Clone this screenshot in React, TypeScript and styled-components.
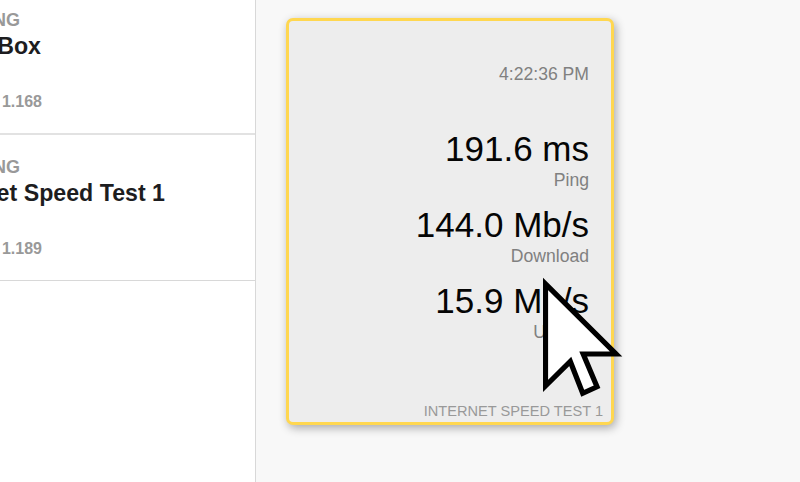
import React from "react";
import styled, { createGlobalStyle } from "styled-components";

const GlobalStyle = createGlobalStyle`
  body { margin: 0; overflow: hidden; background: #f8f8f8; }
  * { box-sizing: border-box; }
`;

const Page = styled.div`
  display: flex;
  width: 800px;
  height: 482px;
  overflow: hidden;
  background: #f8f8f8;
  font-family: "Liberation Sans", Arial, sans-serif;
`;

const Sidebar = styled.aside`
  width: 256px;
  flex: none;
  overflow: hidden;
  background: #fff;
  border-right: 1px solid #d8d8d8;
`;

const Device = styled.section<{ $first?: boolean }>`
  height: ${(p) => (p.$first ? 135 : 146)}px;
  padding-top: ${(p) => (p.$first ? 9 : 21)}px;
  border-bottom: ${(p) => (p.$first ? "2px solid #e2e2e2" : "1px solid #d8d8d8")};
  font-weight: 700;
  white-space: nowrap;
`;

/* Rows end at a fixed edge so that long text runs off the left side. */
const Row = styled.div<{ $end: number }>`
  display: flex;
  justify-content: flex-end;
  width: ${(p) => p.$end}px;
`;

const Kind = styled(Row)`
  font-size: 18px;
  line-height: 22px;
  color: #999;
`;

const Name = styled(Row)`
  font-size: 23.2px;
  line-height: 30px;
  color: #1d1d1f;
`;

const Address = styled(Row)`
  margin-top: 31px;
  font-size: 16px;
  line-height: 20px;
  color: #999;
`;

const Main = styled.main`
  flex: 1;
  padding: 18px 0 0 30px;
`;

const Card = styled.article`
  position: relative;
  display: flex;
  flex-direction: column;
  width: 328px;
  height: 407px;
  padding: 43px 22px 0 0;
  text-align: right;
  white-space: nowrap;
  background: #ededed;
  border: 3px solid #ffd750;
  border-radius: 7px;
  box-shadow: 2px 3px 10px rgba(0, 0, 0, 0.32);
`;

const Time = styled.time`
  font-size: 17.6px;
  line-height: 20px;
  color: #808080;
`;

const Metrics = styled.div`
  display: flex;
  flex-direction: column;
  margin-top: 45px;
`;

const Metric = styled.div`
  height: 76px;
`;

const Value = styled.div`
  font-size: 35px;
  line-height: 40px;
  color: #050505;
`;

const Label = styled.div`
  font-size: 17.6px;
  line-height: 22px;
  color: #808080;
`;

const Footer = styled.footer`
  margin: auto -14px 2px 0;
  font-size: 14.6px;
  line-height: 18px;
  color: #999;
`;

const Pointer = styled.svg`
  position: absolute;
  left: 254px;
  top: 254px;
  width: 84px;
  height: 126px;
`;

const metrics = [
  ["191.6 ms", "Ping"],
  ["144.0 Mb/s", "Download"],
  ["15.9 Mb/s", "Upload"],
];

export default function App() {
  return (
    <Page>
      <GlobalStyle />
      <Sidebar>
        <Device $first>
          <Kind $end={20}>NG</Kind>
          <Name $end={41}>Box</Name>
          <Address $end={42}>1.168</Address>
        </Device>
        <Device>
          <Kind $end={20}>NG</Kind>
          <Name $end={165}>et Speed Test 1</Name>
          <Address $end={42}>1.189</Address>
        </Device>
      </Sidebar>
      <Main>
        <Card>
          <Time>4:22:36 PM</Time>
          <Metrics>
            {metrics.map(([value, label]) => (
              <Metric key={label}>
                <Value>{value}</Value>
                <Label>{label}</Label>
              </Metric>
            ))}
          </Metrics>
          <Footer>INTERNET SPEED TEST 1</Footer>
          <Pointer viewBox="543 275 84 126">
            <path
              d="M545.5 284 L545.5 386 L570.3 361.5 L582.7 393.3 L597 386.8 L583.2 354 L616 354 Z"
              fill="#fff"
              stroke="#000"
              strokeWidth="5.2"
              strokeLinejoin="miter"
              strokeMiterlimit="10"
            />
          </Pointer>
        </Card>
      </Main>
    </Page>
  );
}
